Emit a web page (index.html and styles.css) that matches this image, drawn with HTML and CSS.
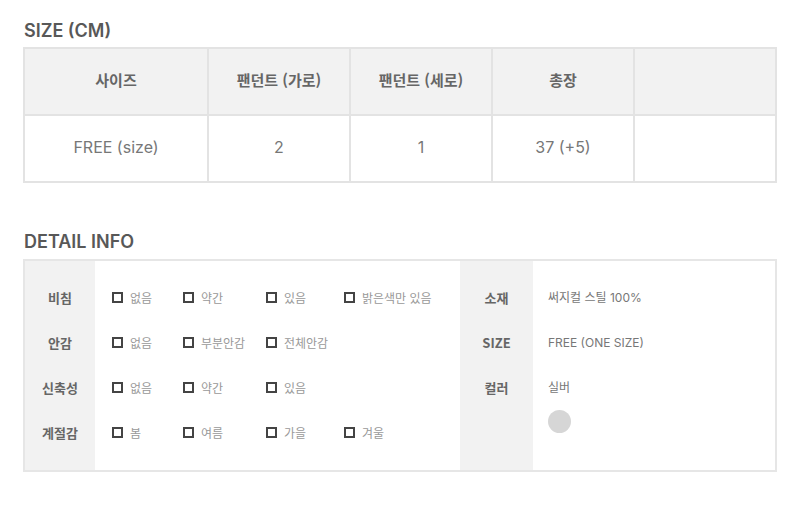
FILE: index.html
```html
<!DOCTYPE html>
<html lang="ko">
<head>
<meta charset="utf-8">
<link rel="stylesheet" href="styles.css">
</head>
<body>
<div class="page">
  <h2 class="title">SIZE (CM)</h2>
  <table class="size-table">
    <colgroup>
      <col class="c-first"><col class="c"><col class="c"><col class="c"><col class="c">
    </colgroup>
    <thead>
      <tr><th>사이즈</th><th>팬던트 (가로)</th><th>팬던트 (세로)</th><th>총장</th><th></th></tr>
    </thead>
    <tbody>
      <tr><td>FREE (size)</td><td>2</td><td>1</td><td>37 (+5)</td><td></td></tr>
    </tbody>
  </table>

  <h2 class="title title-detail">DETAIL INFO</h2>
  <div class="detail">
    <div class="labels labels-left">
      <div class="row">비침</div>
      <div class="row">안감</div>
      <div class="row">신축성</div>
      <div class="row">계절감</div>
    </div>
    <div class="options">
      <div class="row opt-row">
        <span class="opt"><i class="box"></i>없음</span>
        <span class="opt"><i class="box"></i>약간</span>
        <span class="opt"><i class="box"></i>있음</span>
        <span class="opt"><i class="box"></i>밝은색만 있음</span>
      </div>
      <div class="row opt-row">
        <span class="opt"><i class="box"></i>없음</span>
        <span class="opt"><i class="box"></i>부분안감</span>
        <span class="opt"><i class="box"></i>전체안감</span>
      </div>
      <div class="row opt-row">
        <span class="opt"><i class="box"></i>없음</span>
        <span class="opt"><i class="box"></i>약간</span>
        <span class="opt"><i class="box"></i>있음</span>
      </div>
      <div class="row opt-row">
        <span class="opt"><i class="box"></i>봄</span>
        <span class="opt"><i class="box"></i>여름</span>
        <span class="opt"><i class="box"></i>가을</span>
        <span class="opt"><i class="box"></i>겨울</span>
      </div>
    </div>
    <div class="labels labels-right">
      <div class="row">소재</div>
      <div class="row">SIZE</div>
      <div class="row">컬러</div>
    </div>
    <div class="values">
      <div class="row">써지컬 스틸 100%</div>
      <div class="row">FREE (ONE SIZE)</div>
      <div class="row">실버</div>
      <div class="swatch"></div>
    </div>
  </div>
</div>
</body>
</html>
```

FILE: styles.css
```css
html, body {
  margin: 0;
  padding: 0;
  background: #fff;
}
body {
  font-family: Inter, "Liberation Sans", "Noto Sans CJK KR", sans-serif;
  color: #666;
}
.page {
  padding: 21px 23px 0 23px;
}
.title {
  margin: 0 0 6px 1px;
  font-size: 18px;
  line-height: 20px;
  font-weight: 600;
  color: #585858;
}
.title-detail {
  margin-top: 49px;
  margin-bottom: 7px;
}
.size-table {
  width: 754px;
  table-layout: fixed;
  border-collapse: collapse;
  border: 2px solid #e3e3e3;
}
.c-first { width: 184px; }
.c { width: 142px; }
.size-table th,
.size-table td {
  border: 2px solid #e3e3e3;
  text-align: center;
  padding: 0 0 4px 0;
}
.size-table th {
  height: 61px;
  background: #f2f2f2;
  font-family: "Noto Sans CJK KR", Inter, sans-serif;
  font-size: 15px;
  font-weight: 700;
  color: #666;
}
.size-table td {
  height: 61px;
  font-size: 16px;
  font-weight: 400;
  color: #777;
}
.detail {
  display: flex;
  width: 750px;
  border: 2px solid #e6e6e6;
}
.labels {
  background: #f2f2f2;
  padding: 14px 0 15px;
  font-family: "Noto Sans CJK KR", Inter, sans-serif;
  font-size: 13px;
  font-weight: 700;
  color: #666;
  text-align: center;
}
.labels-left { width: 70px; }
.labels-right { width: 73px; }
.row {
  height: 45px;
  line-height: 45px;
}
.options {
  width: 348px;
  padding: 14px 0 15px 17px;
  font-family: "Noto Sans CJK KR", Inter, sans-serif;
  font-size: 12px;
  color: #999;
}
.opt-row {
  display: grid;
  grid-template-columns: 71px 83px 78px auto;
  align-items: center;
}
.opt {
  display: flex;
  align-items: center;
  white-space: nowrap;
}
.box {
  display: inline-block;
  width: 11px;
  height: 11px;
  box-sizing: border-box;
  border: 2px solid #444;
  margin-right: 7px;
}
.values {
  flex: 1;
  padding: 14px 0 15px 15px;
  font-family: Inter, "Noto Sans CJK KR", sans-serif;
  font-size: 12px;
  color: #777;
}
.swatch {
  width: 23px;
  height: 23px;
  border-radius: 50%;
  background: #d6d6d6;
}
```
